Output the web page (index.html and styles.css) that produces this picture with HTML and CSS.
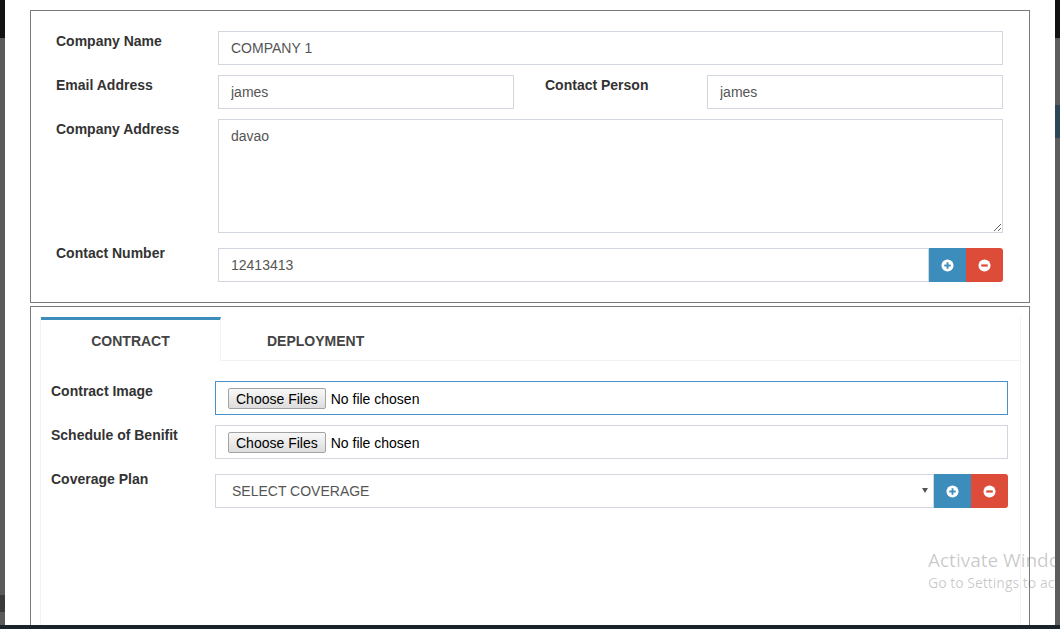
FILE: index.html
```html
<!DOCTYPE html>
<html lang="en">
<head>
<meta charset="utf-8">
<title>Company</title>
<link rel="stylesheet" href="styles.css">
</head>
<body>
<div class="screen">
  <div class="side side-left"></div>
  <div class="modal">
    <section class="box box-company">
      <div class="row">
        <label class="lbl">Company Name</label>
        <input class="ctl" type="text" value="COMPANY 1">
      </div>
      <div class="row split">
        <div class="half">
          <label class="lbl">Email Address</label>
          <input class="ctl" type="text" value="james">
        </div>
        <div class="half">
          <label class="lbl">Contact Person</label>
          <input class="ctl" type="text" value="james">
        </div>
      </div>
      <div class="row">
        <label class="lbl">Company Address</label>
        <textarea class="ctl area">davao</textarea>
      </div>
      <div class="row row-last">
        <label class="lbl">Contact Number</label>
        <div class="group">
          <input class="ctl" type="text" value="12413413">
          <button class="btn btn-add" type="button" aria-label="Add">
            <svg viewBox="0 0 14 14" width="13" height="13"><circle cx="7" cy="7" r="6.5" fill="#fff"/><rect x="3.5" y="6" width="7" height="2" fill="#3c8dbc"/><rect x="6" y="3.5" width="2" height="7" fill="#3c8dbc"/></svg>
          </button>
          <button class="btn btn-del" type="button" aria-label="Remove">
            <svg viewBox="0 0 14 14" width="13" height="13"><circle cx="7" cy="7" r="6.5" fill="#fff"/><rect x="3.5" y="5.8" width="7" height="2.4" fill="#dd4b39"/></svg>
          </button>
        </div>
      </div>
    </section>

    <section class="box box-tabs">
      <div class="tabs">
        <ul class="tab-nav">
          <li class="tab active">CONTRACT</li>
          <li class="tab">DEPLOYMENT</li>
        </ul>
        <div class="tab-body">
          <div class="row">
            <label class="lbl lbl-wide">Contract Image</label>
            <input class="ctl file focus" type="file" multiple>
          </div>
          <div class="row">
            <label class="lbl lbl-wide">Schedule of Benifit</label>
            <input class="ctl file" type="file" multiple>
          </div>
          <div class="row">
            <label class="lbl lbl-wide">Coverage Plan</label>
            <div class="group">
              <div class="select-wrap">
                <select class="ctl select">
                  <option>SELECT COVERAGE</option>
                </select>
              </div>
              <button class="btn btn-add" type="button" aria-label="Add">
                <svg viewBox="0 0 14 14" width="13" height="13"><circle cx="7" cy="7" r="6.5" fill="#fff"/><rect x="3.5" y="6" width="7" height="2" fill="#3c8dbc"/><rect x="6" y="3.5" width="2" height="7" fill="#3c8dbc"/></svg>
              </button>
              <button class="btn btn-del" type="button" aria-label="Remove">
                <svg viewBox="0 0 14 14" width="13" height="13"><circle cx="7" cy="7" r="6.5" fill="#fff"/><rect x="3.5" y="5.8" width="7" height="2.4" fill="#dd4b39"/></svg>
              </button>
            </div>
          </div>
        </div>
      </div>
    </section>

    <div class="watermark">
      <div class="wm-title">Activate Windows</div>
      <div class="wm-sub">Go to Settings to activate Windows.</div>
    </div>
  </div>
  <div class="side side-right"></div>
</div>
<div class="taskbar"></div>
</body>
</html>
```

FILE: styles.css
```css
* { box-sizing: border-box; }

html, body {
  margin: 0;
  padding: 0;
  width: 1060px;
  height: 629px;
  overflow: hidden;
  font-family: "Liberation Sans", Arial, sans-serif;
  background: #5a5a5a;
}

.screen {
  display: flex;
  height: 625px;
}

.side {
  width: 5px;
  flex: none;
}

.side-left {
  background: linear-gradient(to bottom, #121212 0 38px, #5a5a5a 38px 595px, #3a3a3a 595px 612px, #5a5a5a 612px);
}

.side-right {
  background: linear-gradient(to bottom, #121212 0 38px, #5c5c5c 38px 105px, #2c4657 105px 138px, #5c5c5c 138px);
}

.taskbar {
  height: 4px;
  background: #1a222a;
}

.modal {
  flex: 1;
  position: relative;
  overflow: hidden;
  background: #fff;
  padding: 10px 25px 0;
}

.box {
  border: 1px solid #7b7b7b;
  background: #fff;
}

.box-company {
  padding: 20px 26px 20px 25px;
}

.row {
  display: flex;
  margin-bottom: 10px;
}

.row-last { margin-bottom: 0; }

.lbl {
  width: 162px;
  flex: none;
  font-size: 14px;
  font-weight: 700;
  line-height: 20px;
  color: #333;
}

.lbl-wide { width: 164px; }

.split { gap: 31px; }

.half {
  flex: 1;
  display: flex;
  min-width: 0;
}

.ctl {
  flex: 1;
  min-width: 0;
  height: 34px;
  margin: 0;
  padding: 6px 12px;
  border: 1px solid #d2d6de;
  border-radius: 0;
  background: #fff;
  font-family: "Liberation Sans", Arial, sans-serif;
  font-size: 14px;
  line-height: 20px;
  color: #555;
  outline: none;
}

.area {
  height: 114px;
  display: block;
}

.group {
  flex: 1;
  display: flex;
  min-width: 0;
  margin-top: 5px;
}

.btn {
  width: 37px;
  height: 34px;
  flex: none;
  border: 0;
  padding: 0;
  margin: 0;
  display: flex;
  align-items: center;
  justify-content: center;
}

.btn-add { background: #3c8dbc; }

.btn-del {
  background: #dd4b39;
  border-radius: 0 3px 3px 0;
}

.box-tabs {
  margin-top: 3px;
  height: 340px;
  padding: 10px 8px 0 9px;
}

.tabs {
  height: 100%;
  border-left: 1px solid #f2f2f2;
  border-right: 1px solid #f2f2f2;
}

.tab-nav {
  display: flex;
  list-style: none;
  margin: 0;
  padding: 0;
  border-bottom: 1px solid #f2f2f2;
}

.tab {
  height: 44px;
  margin-bottom: -1px;
  border-top: 3px solid transparent;
  line-height: 43px;
  font-size: 14px;
  font-weight: 700;
  color: #444;
  padding: 0 46px;
}

.tab.active {
  width: 180px;
  padding: 0;
  text-align: center;
  border-top-color: #3c8dbc;
  border-right: 1px solid #f2f2f2;
  background: #fff;
}

.tab-body {
  padding: 20px 12px 0 10px;
}

.file {
  padding: 6px 12px 5px;
  font-size: 14px;
  color: #000;
}

.file.focus {
  border-color: #4a90c8;
}

.file::file-selector-button {
  font-family: "Liberation Sans", Arial, sans-serif;
  font-size: 14px;
  color: #000;
  height: 21px;
  padding: 0 7px;
  margin: 0 5px 0 0;
  border: 1px solid #a3a3a3;
  border-radius: 2px;
  background: linear-gradient(to bottom, #f8f8f8, #dddddd);
}

.select-wrap {
  flex: 1;
  position: relative;
  display: flex;
  min-width: 0;
}

.select {
  appearance: none;
  -webkit-appearance: none;
  width: 100%;
  padding-left: 16px;
}

.select-wrap::after {
  content: "";
  position: absolute;
  right: 6px;
  top: 14px;
  border-top: 5px solid #555;
  border-left: 3.5px solid transparent;
  border-right: 3.5px solid transparent;
}

.watermark {
  position: absolute;
  left: 923px;
  top: 547px;
  white-space: nowrap;
  font-family: "Open Sans", "Noto Sans", sans-serif;
  color: rgba(0, 0, 0, 0.22);
  pointer-events: none;
}

.wm-title {
  font-size: 19px;
  line-height: 26px;
}

.wm-sub {
  font-size: 14px;
  line-height: 20px;
}
```
